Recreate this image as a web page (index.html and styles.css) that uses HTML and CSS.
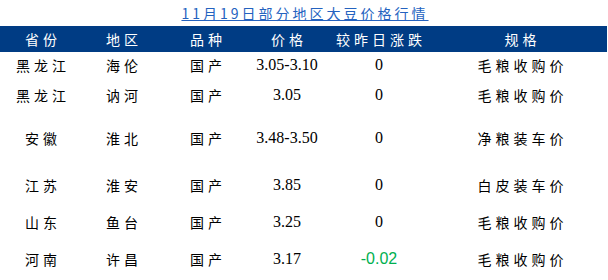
FILE: index.html
```html
<!DOCTYPE html>
<html lang="zh-CN">
<head>
    <meta charset="UTF-8">
    <title>11月19日部分地区大豆价格行情</title>
    <link rel="stylesheet" href="styles.css">
</head>
<body>
    <div class="sheet">
        <div class="title"><span class="title-link">11月19日部分地区大豆价格行情</span></div>
        <table class="prices">
            <colgroup>
                <col class="c-prov">
                <col class="c-area">
                <col class="c-kind">
                <col class="c-price">
                <col class="c-diff">
                <col class="c-spec">
            </colgroup>
            <thead>
                <tr>
                    <th class="cjk">省份</th>
                    <th class="cjk">地区</th>
                    <th class="cjk">品种</th>
                    <th class="cjk">价格</th>
                    <th class="cjk">较昨日涨跌</th>
                    <th class="cjk">规格</th>
                </tr>
            </thead>
            <tbody>
                <tr class="h1">
                    <td class="cjk">黑龙江</td>
                    <td class="cjk">海伦</td>
                    <td class="cjk">国产</td>
                    <td class="num">3.05-3.10</td>
                    <td class="num">0</td>
                    <td class="cjk">毛粮收购价</td>
                </tr>
                <tr class="h2">
                    <td class="cjk">黑龙江</td>
                    <td class="cjk">讷河</td>
                    <td class="cjk">国产</td>
                    <td class="num">3.05</td>
                    <td class="num">0</td>
                    <td class="cjk">毛粮收购价</td>
                </tr>
                <tr class="h3">
                    <td class="cjk">安徽</td>
                    <td class="cjk">淮北</td>
                    <td class="cjk">国产</td>
                    <td class="num">3.48-3.50</td>
                    <td class="num">0</td>
                    <td class="cjk">净粮装车价</td>
                </tr>
                <tr class="h4">
                    <td class="cjk">江苏</td>
                    <td class="cjk">淮安</td>
                    <td class="cjk">国产</td>
                    <td class="num">3.85</td>
                    <td class="num">0</td>
                    <td class="cjk">白皮装车价</td>
                </tr>
                <tr class="h5">
                    <td class="cjk">山东</td>
                    <td class="cjk">鱼台</td>
                    <td class="cjk">国产</td>
                    <td class="num">3.25</td>
                    <td class="num">0</td>
                    <td class="cjk">毛粮收购价</td>
                </tr>
                <tr class="h6">
                    <td class="cjk">河南</td>
                    <td class="cjk">许昌</td>
                    <td class="cjk">国产</td>
                    <td class="num">3.17</td>
                    <td class="num down">-0.02</td>
                    <td class="cjk">毛粮收购价</td>
                </tr>
            </tbody>
        </table>
    </div>
</body>
</html>
```

FILE: styles.css
```css
:root {
    --head-bg: #003c84;
    --title-color: #2462bf;
    --down-color: #00b050;
    --text-color: #000;
}

body {
    margin: 0;
    background: #fff;
    color: var(--text-color);
    font-family: "Noto Sans CJK SC", sans-serif;
}

.sheet {
    width: 607px;
}

.title {
    height: 26px;
    display: flex;
    align-items: flex-end;
    justify-content: center;
    padding-left: 3px;
    box-sizing: border-box;
}

.title-link {
    font-size: 14px;
    line-height: 20px;
    letter-spacing: 3px;
    color: var(--title-color);
    text-decoration: underline;
    text-underline-offset: 1px;
    margin-bottom: 3px;
}

.prices {
    width: 607px;
    border-collapse: collapse;
    table-layout: fixed;
}

.c-prov { width: 82px; }
.c-area { width: 80px; }
.c-kind { width: 88px; }
.c-price { width: 74px; }
.c-diff { width: 110px; }
.c-spec { width: 173px; }

th, td {
    padding: 0;
    text-align: center;
    white-space: nowrap;
    font-weight: normal;
}

thead tr {
    height: 26px;
    background: var(--head-bg);
    color: #fff;
}

th {
    vertical-align: middle;
}

td {
    vertical-align: bottom;
    padding-bottom: 4px;
}

.cjk {
    font-size: 14px;
    line-height: 20px;
    letter-spacing: 4px;
    padding-left: 4px;
}

.num {
    font-family: "Liberation Serif", serif;
    font-size: 16px;
    line-height: 20px;
}

.num.down {
    font-family: "Liberation Sans", sans-serif;
    color: var(--down-color);
}

.h1 { height: 27px; }
.h2 { height: 30px; }
.h3 { height: 43px; }
.h4 { height: 47px; }
.h5 { height: 37px; }
.h6 { height: 37px; }
```
